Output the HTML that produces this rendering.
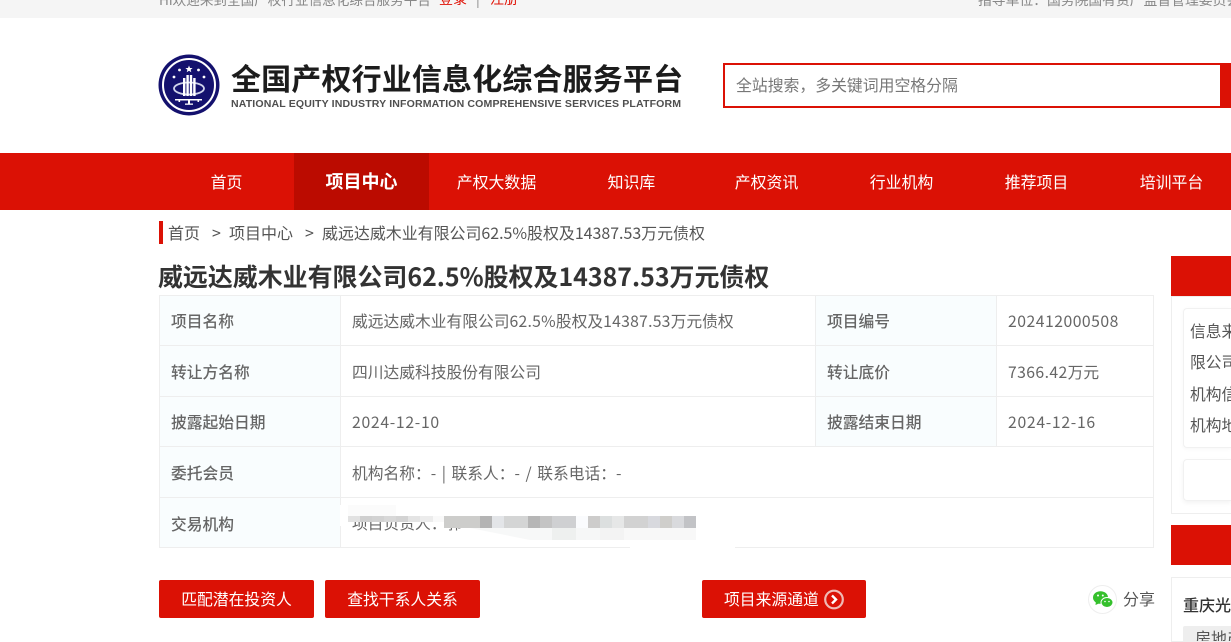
<!DOCTYPE html>
<html lang="zh-CN">
<head>
<meta charset="utf-8">
<title>威远达威木业有限公司62.5%股权及14387.53万元债权</title>
<style>
*{box-sizing:border-box;margin:0;padding:0}
html,body{width:1231px;height:642px;overflow:hidden;background:#fff}
body{position:relative;font-family:"Liberation Sans","Noto Sans CJK SC",sans-serif;color:#333}
.a{position:absolute;white-space:nowrap}
.cjk{font-family:"Noto Sans CJK SC","Liberation Sans",sans-serif}
.nav{position:absolute;top:153px;height:57px;line-height:57px;width:135px;text-align:center;color:#fff;font-size:15.9px;font-family:"Noto Sans CJK SC",sans-serif}
.lbl{position:absolute;background:#f9fdfe;font-size:15.75px;font-weight:500;color:#666;padding-left:11px;font-family:"Noto Sans CJK SC",sans-serif}
.val{position:absolute;font-size:15.75px;color:#666;white-space:nowrap;font-family:"Noto Sans CJK SC",sans-serif}
.h{position:absolute;background:#eeeeee;height:1px;left:159px;width:995px}
.v{position:absolute;background:#eeeeee;width:1px}
.btn{position:absolute;top:580px;height:38px;line-height:38px;background:#db1105;color:#fff;border-radius:2px;text-align:center;font-size:15.8px;font-family:"Noto Sans CJK SC",sans-serif}
.p{position:absolute;top:516px;height:12px}
</style>
</head>
<body>
<div style="position:absolute;left:0;top:0;width:1231px;height:18px;background:#f5f5f5;overflow:hidden">
  <div class="a cjk" style="left:159px;top:-13px;font-size:13.6px;line-height:24px;color:#888">Hi欢迎来到全国产权行业信息化综合服务平台</div>
  <div class="a cjk" style="left:439px;top:-13px;font-size:14px;line-height:24px;color:#e01206">登录</div>
  <div class="a cjk" style="left:476px;top:-13px;font-size:14px;line-height:24px;color:#888">|</div>
  <div class="a cjk" style="left:490px;top:-13px;font-size:14px;line-height:24px;color:#e01206">注册</div>
  <div class="a cjk" style="left:978px;top:-13px;font-size:13.8px;line-height:24px;color:#888">指导单位：国务院国有资产监督管理委员会</div>
</div>

<svg style="position:absolute;left:158px;top:54px" width="62" height="62" viewBox="0 0 62 62">
  <circle cx="31" cy="31" r="30.5" fill="#14116e"/>
  <circle cx="31" cy="31" r="26" fill="none" stroke="#fff" stroke-width="2"/>
  <ellipse cx="31" cy="34.5" rx="15" ry="6" fill="none" stroke="#cfd3ea" stroke-width="1.8"/>
  <g fill="#fff">
    <polygon points="31,11.5 32,14 34.6,14 32.6,15.7 33.3,18.2 31,16.8 28.7,18.2 29.4,15.7 27.4,14 30,14"/>
    <circle cx="21.5" cy="16" r="1.4"/><circle cx="40.5" cy="16" r="1.4"/>
    <circle cx="16" cy="23" r="1.4"/><circle cx="46" cy="23" r="1.4"/>
    <rect x="25" y="24" width="2.4" height="18"/><rect x="28.4" y="21" width="2.4" height="21"/>
    <rect x="31.8" y="21" width="2.4" height="21"/><rect x="35.2" y="24" width="2.4" height="18"/>
    <rect x="17" y="45" width="27" height="1.5"/>
    <rect x="30" y="45" width="2" height="5"/><rect x="20.5" y="45" width="1.6" height="3"/><rect x="39.5" y="45" width="1.6" height="3"/>
    <rect x="27" y="49.5" width="8" height="1.3"/>
  </g>
</svg>

<div class="a cjk" style="left:231px;top:55px;font-size:30px;line-height:44px;font-weight:700;color:#1c1c1c;letter-spacing:.15px">全国产权行业信息化综合服务平台</div>
<div class="a" style="left:231px;top:97px;font-size:10.56px;line-height:14px;font-weight:700;color:#4f4f4f;font-family:'Liberation Sans',sans-serif;letter-spacing:.14px">NATIONAL EQUITY INDUSTRY INFORMATION COMPREHENSIVE SERVICES PLATFORM</div>

<div style="position:absolute;left:723px;top:63px;width:499px;height:45px;border:2px solid #db1105;background:#fff"></div>
<div style="position:absolute;left:1220px;top:63px;width:11px;height:45px;background:#db1105"></div>
<div class="a cjk" style="left:736px;top:73px;font-size:15.85px;line-height:24px;color:#777">全站搜索，多关键词用空格分隔</div>

<div style="position:absolute;left:0;top:153px;width:1231px;height:57px;background:#db1105"></div>
<div style="position:absolute;left:294px;top:153px;width:135px;height:57px;background:#bb0b00"></div>
<div class="nav" style="left:159px">首页</div>
<div class="nav" style="left:294px;font-weight:700;font-size:18px">项目中心</div>
<div class="nav" style="left:429px">产权大数据</div>
<div class="nav" style="left:564px">知识库</div>
<div class="nav" style="left:699px">产权资讯</div>
<div class="nav" style="left:834px">行业机构</div>
<div class="nav" style="left:969px">推荐项目</div>
<div class="nav" style="left:1104px">培训平台</div>

<div style="position:absolute;left:159px;top:221px;width:4px;height:23px;background:#db1105"></div>
<div class="a cjk" style="left:168px;top:221px;font-size:16px;line-height:23px;color:#555">首页</div>
<div class="a cjk" style="left:212px;top:221px;font-size:16px;line-height:23px;color:#555">&gt;</div>
<div class="a cjk" style="left:229px;top:221px;font-size:16px;line-height:23px;color:#555">项目中心</div>
<div class="a cjk" style="left:305px;top:221px;font-size:16px;line-height:23px;color:#555">&gt;</div>
<div class="a cjk" style="left:322px;top:221px;font-size:15.95px;line-height:23px;color:#555">威远达威木业有限公司62.5%股权及14387.53万元债权</div>

<div class="a cjk" style="left:158px;top:258px;font-size:24.95px;line-height:36px;font-weight:700;color:#333">威远达威木业有限公司62.5%股权及14387.53万元债权</div>

<div class="lbl" style="left:160px;top:296px;width:180px;height:49px;line-height:49px">项目名称</div>
<div class="lbl" style="left:160px;top:346px;width:180px;height:50px;line-height:51px">转让方名称</div>
<div class="lbl" style="left:160px;top:397px;width:180px;height:49px;line-height:50px">披露起始日期</div>
<div class="lbl" style="left:160px;top:447px;width:180px;height:50px;line-height:51px">委托会员</div>
<div class="lbl" style="left:160px;top:498px;width:180px;height:49px;line-height:51px">交易机构</div>
<div class="lbl" style="left:816px;top:296px;width:180px;height:49px;line-height:49px">项目编号</div>
<div class="lbl" style="left:816px;top:346px;width:180px;height:50px;line-height:51px">转让底价</div>
<div class="lbl" style="left:816px;top:397px;width:180px;height:49px;line-height:50px">披露结束日期</div>

<div class="h" style="top:295px"></div>
<div class="h" style="top:345px"></div>
<div class="h" style="top:396px"></div>
<div class="h" style="top:446px"></div>
<div class="h" style="top:497px"></div>
<div class="h" style="top:547px"></div>
<div class="v" style="left:159px;top:295px;height:253px"></div>
<div class="v" style="left:340px;top:295px;height:253px"></div>
<div class="v" style="left:815px;top:295px;height:152px"></div>
<div class="v" style="left:996px;top:295px;height:152px"></div>
<div class="v" style="left:1153px;top:295px;height:253px"></div>

<div class="val" style="left:352px;top:310px;line-height:22px">威远达威木业有限公司<span style="letter-spacing:.25px">62.5%</span>股权及<span style="letter-spacing:.25px">14387.53</span>万元债权</div>
<div class="val" style="left:352px;top:361px;line-height:22px">四川达威科技股份有限公司</div>
<div class="val" style="left:352px;top:411px;line-height:22px;letter-spacing:.7px">2024-12-10</div>
<div class="val" style="left:352px;top:462px;line-height:22px;word-spacing:2px">机构名称：- | 联系人：- / 联系电话：-</div>
<div class="val" style="left:352px;top:512px;line-height:22px">项目负责人：郭</div>
<div class="val" style="left:1008px;top:310px;line-height:22px;letter-spacing:.5px">202412000508</div>
<div class="val" style="left:1008px;top:361px;line-height:22px"><span style="letter-spacing:.4px">7366.42</span>万元</div>
<div class="val" style="left:1008px;top:411px;line-height:22px;letter-spacing:.7px">2024-12-16</div>

<div style="position:absolute;left:340px;top:505px;width:400px;height:11px;background:#fff"></div>
<div style="position:absolute;left:340px;top:505px;width:1px;height:21px;background:#fff"></div>
<div style="position:absolute;left:348px;top:505px;width:48px;height:11px;background:#fbfbfb"></div>
<div style="position:absolute;left:630px;top:547px;width:105px;height:1px;background:#fff"></div>
<div style="position:absolute;left:348px;top:516px;width:85px;height:6px;background:linear-gradient(90deg,#e2e2e2 0 12px,#cfcfcf 12px 24px,#d2d2d2 24px 36px,#d8d8d8 36px 48px,#d3d3d3 48px 60px,#e4e4e4 60px 72px,#ececec 72px)"></div>
<div style="position:absolute;left:433px;top:516px;width:11px;height:6px;background:#f9f9f9"></div>
<div class="p" style="left:444px;width:36px;background:#cdcdcb"></div>
<div class="p" style="left:480px;width:12px;background:#b4b4b4"></div>
<div class="p" style="left:492px;width:12px;background:#e3e5e8"></div>
<div class="p" style="left:504px;width:24px;background:#d4d5d5"></div>
<div class="p" style="left:528px;width:12px;background:#b6b6b6"></div>
<div class="p" style="left:540px;width:12px;background:#c4c4c4"></div>
<div class="p" style="left:552px;width:24px;background:#cfd0d2"></div>
<div class="p" style="left:576px;width:12px;background:#fafbfd"></div>
<div class="p" style="left:588px;width:12px;background:#cdcccb"></div>
<div class="p" style="left:600px;width:12px;background:#dcdfdf"></div>
<div class="p" style="left:612px;width:12px;background:#e6e7e7"></div>
<div class="p" style="left:624px;width:24px;background:#d2d2d2"></div>
<div class="p" style="left:648px;width:12px;background:#d8d9de"></div>
<div class="p" style="left:660px;width:12px;background:#cfcecb"></div>
<div class="p" style="left:672px;width:12px;background:#d9dadd"></div>
<div class="p" style="left:684px;width:12px;background:#c2c3c6"></div>
<div style="position:absolute;left:470px;top:528px;width:226px;height:12px;background:linear-gradient(90deg,#f7f8f8 0 82px,#eef0ef 82px 106px,#f6f7f7 106px 130px,#f3f3f3 130px 154px,#f8f8f8 154px);clip-path:polygon(0 0,100% 0,100% 100%,60px 100%)"></div>

<div class="btn" style="left:159px;width:155px">匹配潜在投资人</div>
<div class="btn" style="left:325px;width:155px">查找干系人关系</div>
<div class="btn" style="left:702px;width:164px;text-align:left;padding-left:22px">项目来源通道</div>
<svg style="position:absolute;left:823px;top:589px" width="22" height="21" viewBox="0 0 22 21">
  <circle cx="11" cy="10.5" r="8.8" fill="none" stroke="#f0b9b4" stroke-width="2.2"/>
  <path d="M9 6.5 L13 10.5 L9 14.5" fill="none" stroke="#fff" stroke-width="2.4"/>
</svg>

<div style="position:absolute;left:1088px;top:585px;width:29px;height:29px;border:1px solid #eee;border-radius:50%;background:#fff"></div>
<svg style="position:absolute;left:1092px;top:590px" width="22" height="20" viewBox="0 0 22 20">
  <ellipse cx="8.5" cy="7.5" rx="7.5" ry="6.3" fill="#35c02c"/>
  <path d="M4 11 L3.5 15 L8 13 Z" fill="#35c02c"/>
  <ellipse cx="15" cy="12.5" rx="6" ry="5" fill="#35c02c" stroke="#fff" stroke-width="1"/>
  <circle cx="6" cy="5.5" r="1" fill="#fff"/><circle cx="10.8" cy="5.5" r="1" fill="#fff"/>
  <circle cx="13" cy="11.5" r=".8" fill="#fff"/><circle cx="17" cy="11.5" r=".8" fill="#fff"/>
</svg>
<div class="a cjk" style="left:1123px;top:587px;font-size:16px;line-height:22px;color:#555">分享</div>

<div style="position:absolute;left:1171px;top:256px;width:60px;height:40px;background:#db1105"></div>
<div style="position:absolute;left:1171px;top:296px;width:60px;height:218px;border:1px solid #eee;border-right:0;background:#fff"></div>
<div style="position:absolute;left:1183px;top:308px;width:48px;height:140px;border:1px solid #f1f1f1;border-right:0;border-radius:4px 0 0 4px;box-shadow:0 1px 4px rgba(0,0,0,.04);overflow:hidden">
  <div class="a cjk" style="left:6px;top:11px;font-size:15.75px;line-height:22px;color:#555">信息来源</div>
  <div class="a cjk" style="left:6px;top:42px;font-size:15.75px;line-height:22px;color:#555">限公司</div>
  <div class="a cjk" style="left:6px;top:74px;font-size:15.75px;line-height:22px;color:#555">机构信息</div>
  <div class="a cjk" style="left:6px;top:105px;font-size:15.75px;line-height:22px;color:#555">机构地址</div>
</div>
<div style="position:absolute;left:1183px;top:459px;width:48px;height:42px;border:1px solid #f1f1f1;border-right:0;border-radius:4px 0 0 4px;box-shadow:0 2px 5px rgba(0,0,0,.05)"></div>
<div style="position:absolute;left:1171px;top:525px;width:60px;height:40px;background:#db1105"></div>
<div style="position:absolute;left:1171px;top:577px;width:60px;height:65px;border:1px solid #eee;border-right:0;background:#fff;overflow:hidden">
  <div class="a cjk" style="left:11px;top:15px;font-size:16px;line-height:22px;font-weight:500;color:#333">重庆光大</div>
  <div class="a cjk" style="left:11px;top:48px;width:60px;height:22px;background:#eee;border-radius:2px;padding-left:12px;font-size:16px;line-height:22px;color:#555">房地产</div>
</div>
</body>
</html>
